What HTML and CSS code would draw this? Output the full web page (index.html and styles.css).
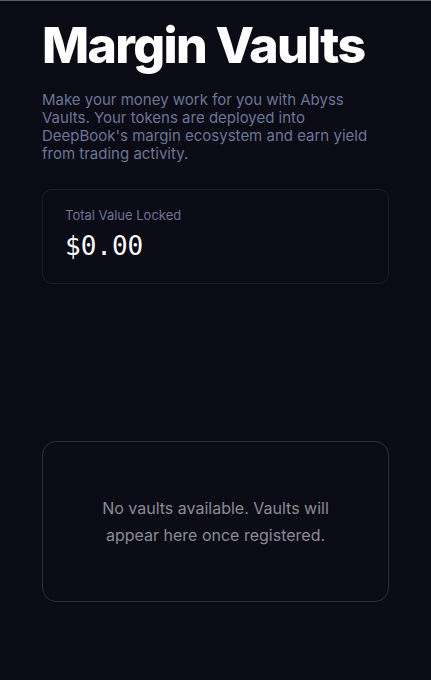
FILE: index.html
```html
<!DOCTYPE html>
<html lang="en">
<head>
  <meta charset="UTF-8" />
  <meta name="viewport" content="width=device-width, initial-scale=1.0"/>
  <title>Margin Vaults - Abyss</title>
  <link rel="stylesheet" href="styles.css">
</head>
<body>

  <main class="page">
    <h1 class="title">Margin Vaults</h1>
    <p class="intro">Make your money work for you with Abyss Vaults. Your tokens are deployed into DeepBook's margin ecosystem and earn yield from trading activity.</p>

    <div class="tvl-card">
      <div class="tvl-label">Total Value Locked</div>
      <div class="tvl-value">$0.00</div>
    </div>

    <div class="empty-card">
      <p>No vaults available. Vaults will appear here once registered.</p>
    </div>
  </main>

</body>
</html>
```

FILE: styles.css
```css
* {
  box-sizing: border-box;
}

html {
  background-color: #0a0b14;
}

body {
  margin: 0;
  font-family: Inter, "Noto Sans", sans-serif;
  background-color: #0a0b14;
  color: #fff;
  border-top: 1px solid #5a5c66;
}

.page {
  padding: 14px 42px 0;
}

.title {
  margin: 0;
  font-size: 50px;
  font-weight: 800;
  letter-spacing: -0.033em;
  line-height: 60px;
  white-space: nowrap;
}

.intro {
  margin: 16px 0 0;
  font-size: 15px;
  line-height: 18px;
  color: #6d7594;
  max-width: 330px;
}

.tvl-card {
  margin-top: 26px;
  border: 1px solid #1c1e2e;
  border-radius: 10px;
  padding: 17px 22px 20px;
  height: 95px;
}

.tvl-label {
  font-size: 13px;
  color: #6d7594;
}

.tvl-value {
  margin-top: 8px;
  font-family: "DejaVu Sans Mono", "Liberation Mono", monospace;
  font-size: 26px;
  color: #fff;
}

.empty-card {
  margin-top: 157px;
  border: 1px solid #2c2e38;
  border-radius: 14px;
  height: 161px;
  display: flex;
  align-items: center;
  justify-content: center;
  padding: 0 50px;
}

.empty-card p {
  margin: 0;
  text-align: center;
  font-size: 16px;
  line-height: 27px;
  color: #8a8c96;
}
```
